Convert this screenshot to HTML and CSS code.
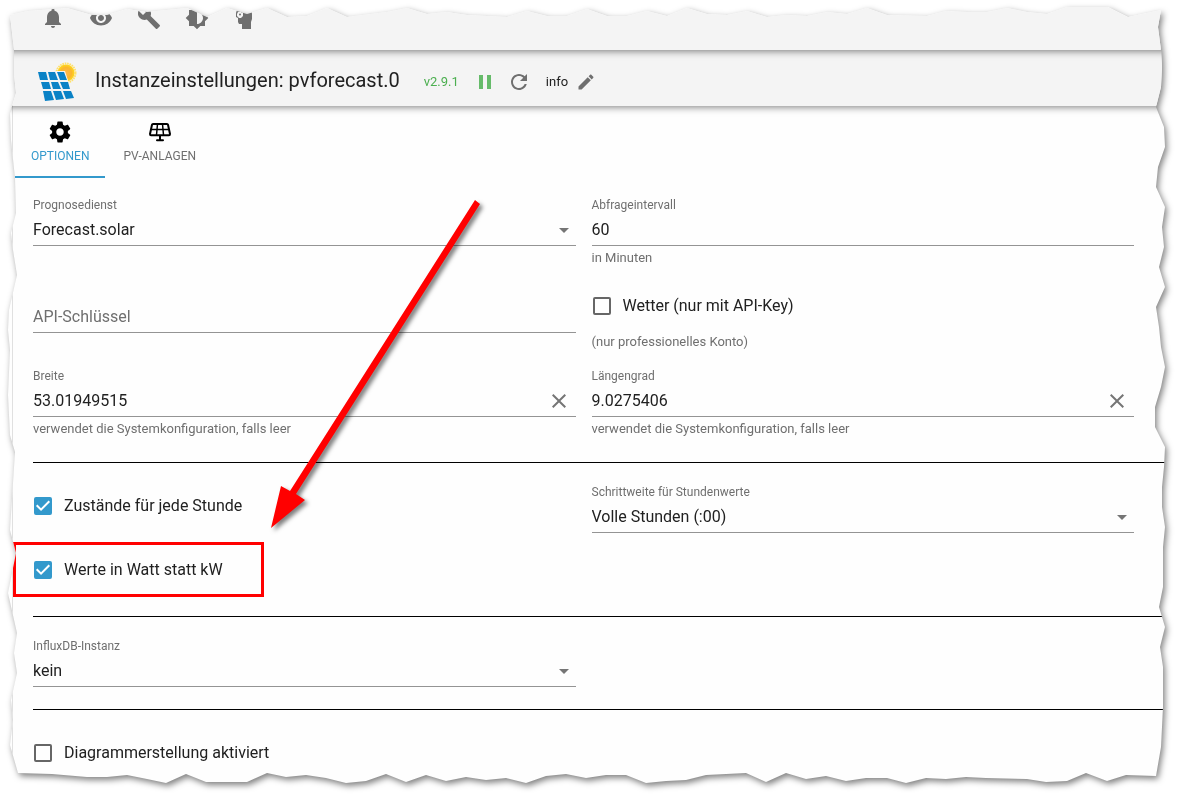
FILE: index.html
```html
<!DOCTYPE html>
<html lang="de">
<head>
<meta charset="utf-8">
<title>Instanzeinstellungen: pvforecast.0</title>
<link rel="stylesheet" href="styles.css">
</head>
<body>
<svg class="defs" width="0" height="0" aria-hidden="true">
  <clipPath id="torn" clipPathUnits="objectBoundingBox">
    <path transform="scale(0.00084962 0.00125786)" d="M10 15 L28 11 67 8 92 15 107 15 127 9 147 12 187 8 207 17 227 8 247 14 267 8 287 17 307 16 327 8 347 17 387 12 407 8 427 14 447 12 467 15 507 17 527 11 547 16 567 16 587 9 607 16 627 16 647 11 667 16 687 8 707 14 727 15 747 11 767 17 787 15 807 16 827 12 847 14 867 8 887 15 927 16 946 11 967 12 987 12 1007 8 1027 12 1047 14 1067 7 1108 7 1128 17 1161 10 1158 27 1161 50 1162 67 1161 87 1156 107 1164 127 1165 147 1158 167 1156 187 1165 207 1162 227 1164 247 1159 267 1165 287 1156 307 1159 327 1161 347 1165 367 1161 387 1155 407 1155 427 1165 447 1164 467 1162 487 1162 507 1165 527 1163 547 1163 587 1159 607 1165 627 1160 647 1163 667 1163 707 1161 747 1156 776 1126 775 1107 781 1086 773 1067 781 1046 782 1027 779 986 778 966 777 946 779 926 778 906 783 887 778 866 778 846 781 826 776 806 779 786 773 766 782 746 773 706 775 686 780 666 781 646 783 626 775 606 775 586 778 566 774 546 776 526 783 506 778 486 780 466 777 446 781 426 775 406 782 386 774 366 781 346 783 326 778 306 775 286 777 267 773 247 782 206 782 186 774 166 783 147 779 127 775 107 777 87 777 52 774 18 773 10 745 13 720 11 700 17 673 14 653 17 633 8 593 16 553 10 530 15 452 10 435 8 395 10 350 8 330 9 310 17 275 13 250 11 233 16 213 15 178 11 140 10 113 16 93 14 74 14 50Z"/>
  </clipPath>
</svg>
<div class="sheet">
  <div class="paper">
    <nav class="toolbar" aria-label="Werkzeuge">
      <button class="tool" aria-label="Benachrichtigungen"><svg viewBox="0 0 24 24"><path d="M12 22c1.100 0 2-.9 2-2h-4c0 1.100.9 2 2 2zm6-6v-5c0-3.070-1.630-5.640-4.500-6.320V4c0-.83-.67-1.500-1.500-1.500s-1.500.67-1.500 1.500v.68C7.640 5.360 6 7.920 6 11v5l-2 2v1h16v-1l-2-2z"/></svg></button>
      <button class="tool" aria-label="Ansicht"><svg viewBox="0 0 24 24"><path d="M12 4.500C7 4.500 2.730 7.610 1 12c1.730 4.390 6 7.500 11 7.500s9.270-3.110 11-7.500c-1.730-4.390-6-7.500-11-7.500zM12 17c-2.760 0-5-2.240-5-5s2.240-5 5-5 5 2.240 5 5-2.240 5-5 5zm0-8c-1.660 0-3 1.340-3 3s1.340 3 3 3 3-1.340 3-3-1.340-3-3-3z"/></svg></button>
      <button class="tool" aria-label="Systemeinstellungen"><svg viewBox="0 0 24 24"><path d="M22.700 19l-9.100-9.100c.9-2.300.4-5-1.500-6.900-2-2-5-2.400-7.400-1.300L9 6 6 9 1.600 4.700C.4 7.100.9 10.100 2.900 12.100c1.900 1.900 4.600 2.400 6.900 1.500l9.100 9.100c.4.4 1 .4 1.400 0l2.300-2.300c.5-.4.5-1.100.1-1.400z"/></svg></button>
      <button class="tool" aria-label="Farbschema"><svg viewBox="0 0 24 24"><path d="M20 8.690V4h-4.690L12 .69 8.690 4H4v4.690L.69 12 4 15.310V20h4.690L12 23.310 15.310 20H20v-4.690L23.310 12 20 8.690zM12 18V6c3.310 0 6 2.690 6 6s-2.690 6-6 6z"/></svg></button>
      <button class="tool" aria-label="Expertenmodus"><svg viewBox="0 0 24 24"><path fill-rule="evenodd" d="M11 1C6 1 3 4 3 8v3l2 1v4l1 2h3v5h9v-7l1-3V8c0-4-3-7-8-7zM5 6h3l1 1 1-1v4l-2 2H6L4 10V8zM6 8.500a1 1 0 1 0 2 0 1 1 0 1 0-2 0z"/></svg></button>
    </nav>
    <header class="titlebar">
      <svg class="logo" viewBox="0 0 40 40" aria-hidden="true">
        <defs><radialGradient id="sun"><stop offset="0" stop-color="#ffb84d"/><stop offset=".65" stop-color="#fbb62c"/><stop offset="1" stop-color="#ffd91c"/></radialGradient></defs>
        <circle cx="28" cy="11" r="9.500" fill="none" stroke="#ffe06a" stroke-width="2" stroke-dasharray="1.600 .8"/>
        <circle cx="28" cy="11" r="8.500" fill="url(#sun)"/>
        <path d="M0 9H27L36 37 7 39Z" fill="#f4f4f4"/>
        <g fill="#0a82c6">
          <path d="M0 10h8l2 8H2z"/><path d="M10 10h7l3 8h-8z"/><path d="M19 10h7l3 8h-7z"/>
          <path d="M3 20h8l2 7H5z"/><path d="M13 20h7l3 7h-8z"/><path d="M22 20h8l2 7h-7z"/>
          <path d="M5 29h8l3 9-9 1z"/><path d="M15 29h8l3 8-8 1z"/><path d="M25 29h8l3 7-8 1z"/>
        </g>
      </svg>
      <h1 class="title">Instanzeinstellungen: pvforecast.0</h1>
      <span class="version">v2.9.1</span>
      <button class="action pause" aria-label="Pause"><svg viewBox="0 0 24 24"><path d="M6 19h4V5H6v14zm8-14v14h4V5h-4z"/></svg></button>
      <button class="action reload" aria-label="Neu starten"><svg viewBox="0 0 24 24"><path d="M17.650 6.350C16.200 4.900 14.210 4 12 4c-4.420 0-7.990 3.580-7.990 8s3.570 8 7.990 8c3.730 0 6.840-2.550 7.730-6h-2.080c-.82 2.330-3.040 4-5.650 4-3.310 0-6-2.690-6-6s2.690-6 6-6c1.660 0 3.140.69 4.220 1.780L13 11h7V4l-2.350 2.350z"/></svg></button>
      <span class="loglevel">info</span>
      <button class="action edit" aria-label="Bearbeiten"><svg viewBox="0 0 24 24"><path d="M3 17.250V21h3.750L17.810 9.940l-3.750-3.750L3 17.250zM20.710 7.040c.39-.39.39-1.020 0-1.410l-2.340-2.340c-.39-.39-1.020-.39-1.410 0l-1.830 1.830 3.750 3.750 1.830-1.830z"/></svg></button>
    </header>
    <main class="content">
      <div class="tabs" role="tablist">
        <button class="tab selected" role="tab" aria-selected="true"><svg viewBox="0 0 24 24"><path transform="translate(-1.200 -1.200) scale(1.100)" d="M19.140 12.940c.04-.3.060-.61.060-.94 0-.32-.02-.64-.07-.94l2.030-1.580c.18-.14.230-.41.120-.61l-1.920-3.320c-.12-.22-.37-.29-.59-.22l-2.390.96c-.5-.38-1.030-.7-1.620-.94l-.36-2.540c-.04-.24-.24-.41-.48-.41h-3.840c-.24 0-.43.170-.47.410l-.36 2.540c-.59.240-1.130.570-1.620.940l-2.390-.96c-.22-.08-.47 0-.59.220L2.740 8.870c-.12.210-.08.470.12.610l2.030 1.580c-.05.300-.09.630-.09.940s.02.640.070.940l-2.030 1.580c-.18.140-.23.410-.12.610l1.920 3.320c.12.220.37.290.59.220l2.390-.96c.5.380 1.030.7 1.620.94l.36 2.540c.05.240.24.410.48.410h3.840c.24 0 .44-.17.470-.41l.36-2.540c.59-.24 1.130-.56 1.620-.94l2.390.96c.22.080.470 0 .59-.22l1.920-3.320c.12-.22.070-.47-.12-.61l-2.010-1.580zM12 15.400c-1.880 0-3.400-1.520-3.400-3.400s1.520-3.400 3.400-3.400 3.400 1.520 3.400 3.400-1.520 3.400-3.400 3.400z"/></svg>OPTIONEN</button>
        <button class="tab" role="tab" aria-selected="false"><svg viewBox="0 0 24 24"><g fill="none" stroke="#000" stroke-linejoin="round" stroke-linecap="round"><path stroke-width="2" d="M5 4h14q.8 0 1 .8L22 14q0 1.200-1 1.200H3q-1 0-1-1.200L4 4.800q.2-.8 1-.8ZM12 16v4M9 20.300h6"/><path stroke-width="1.500" d="M3 9.500h18M9.500 4l-1 11M14.500 4l1 11"/></g></svg>PV-ANLAGEN</button>
      </div>

      <section class="group first">
        <div class="field">
          <label for="service">Prognosedienst</label>
          <div class="control"><select id="service"><option>Forecast.solar</option></select><svg class="caret" viewBox="0 0 24 24"><path d="M7 10l5 5 5-5z"/></svg></div>
        </div>
        <div class="field">
          <label for="interval">Abfrageintervall</label>
          <div class="control"><input id="interval" type="text" value="60"></div>
          <p class="hint">in Minuten</p>
        </div>
        <div class="field unlabelled">
          <div class="control"><input id="apikey" type="text" placeholder="API-Schlüssel" aria-label="API-Schlüssel"></div>
        </div>
        <div class="field">
          <label class="check"><input type="checkbox">Wetter (nur mit API-Key)</label>
          <p class="hint note">(nur professionelles Konto)</p>
        </div>
        <div class="field">
          <label for="lat">Breite</label>
          <div class="control"><input id="lat" type="text" value="53.01949515"><button class="clear" aria-label="Breite löschen"><svg viewBox="0 0 24 24"><path d="M19 6.410L17.590 5 12 10.590 6.410 5 5 6.410 10.590 12 5 17.590 6.410 19 12 13.410 17.590 19 19 17.590 13.410 12z"/></svg></button></div>
          <p class="hint">verwendet die Systemkonfiguration, falls leer</p>
        </div>
        <div class="field">
          <label for="lon">Längengrad</label>
          <div class="control"><input id="lon" type="text" value="9.0275406"><button class="clear" aria-label="Längengrad löschen"><svg viewBox="0 0 24 24"><path d="M19 6.410L17.590 5 12 10.590 6.410 5 5 6.410 10.590 12 5 17.590 6.410 19 12 13.410 17.590 19 19 17.590 13.410 12z"/></svg></button></div>
          <p class="hint">verwendet die Systemkonfiguration, falls leer</p>
        </div>
      </section>

      <section class="group hourly">
        <label class="check"><input type="checkbox" checked>Zustände für jede Stunde</label>
        <div class="field">
          <label for="step">Schrittweite für Stundenwerte</label>
          <div class="control"><select id="step"><option>Volle Stunden (:00)</option></select><svg class="caret" viewBox="0 0 24 24"><path d="M7 10l5 5 5-5z"/></svg></div>
        </div>
        <label class="check marked"><input type="checkbox" checked>Werte in Watt statt kW</label>
        <svg class="arrow" viewBox="0 0 240 350" aria-hidden="true"><path d="M215 10L220 14 36 304 45 310 11 338 21 296 30 301Z"/></svg>
      </section>

      <section class="group influx">
        <div class="field">
          <label for="influx">InfluxDB-Instanz</label>
          <div class="control"><select id="influx"><option>kein</option></select><svg class="caret" viewBox="0 0 24 24"><path d="M7 10l5 5 5-5z"/></svg></div>
        </div>
      </section>

      <section class="group chart">
        <label class="check"><input type="checkbox">Diagrammerstellung aktiviert</label>
      </section>
    </main>
  </div>
</div>
</body>
</html>
```
FILE: styles.css
```css
*,
*::after {
  box-sizing: border-box;
}

body {
  margin: 0;
  background: #fff;
  color: #212121;
  font: 16px/24px Roboto, sans-serif;
}

button {
  padding: 0;
  border: 0;
  background: none;
  font: inherit;
  color: inherit;
}

svg {
  display: block;
  fill: currentColor;
}

.defs {
  position: absolute;
}

.sheet {
  filter: drop-shadow(2px 3px 3px rgba(0, 0, 0, 0.5));
}

.paper {
  background: #fefefe;
  clip-path: url(#torn);
}

.toolbar,
.titlebar {
  position: relative;
  display: flex;
  background: #f4f4f4;
  box-shadow: 0 2px 4px -1px rgba(0, 0, 0, 0.2), 0 4px 5px 0 rgba(0, 0, 0, 0.14), 0 1px 10px 0 rgba(0, 0, 0, 0.12);
}

.toolbar {
  z-index: 2;
  padding: 6px 29px 20px;
  color: #6f6f6f;
}

.tool {
  display: grid;
  place-items: center;
  width: 48px;
}

.tool svg {
  width: 24px;
}

.titlebar {
  z-index: 1;
  align-items: center;
  height: 56px;
  padding: 8px 38px 0;
}

.logo {
  width: 40px;
  margin-right: 17px;
}

.title {
  margin: 0 24px 4px 0;
  font-size: 20px;
  font-weight: 400;
}

.version,
.loglevel {
  font-size: 13px;
}

.version {
  color: #4caf50;
  margin-right: 14px;
}

.action svg {
  width: 24px;
}

.action {
  color: #6f6f6f;
}

.pause {
  color: #66bb6a;
}

.reload {
  margin: 0 15px 0 10px;
}

.edit {
  margin-left: 8px;
}

.edit svg {
  width: 20px;
}

.content {
  position: relative;
  margin-left: 12px;
  border-left: 1px solid #e0e0e0;
}

.tabs {
  display: flex;
  gap: 2px;
  padding-left: 2px;
}

.tab {
  display: flex;
  flex-direction: column;
  align-items: center;
  gap: 2px;
  min-width: 90px;
  height: 72px;
  padding: 14px 16px 0;
  border-bottom: 2px solid transparent;
  font-size: 12px;
  line-height: 20px;
  color: #6f6f6f;
}

.tab svg {
  width: 24px;
  color: #000;
}

.tab.selected {
  color: #3399cc;
  border-bottom-color: #3399cc;
}

.group {
  position: relative;
  display: grid;
  grid-template-columns: 1fr 1fr;
  column-gap: 16px;
  align-items: start;
  margin-left: 20px;
  padding: 21px 43px 0 0;
  border-top: 1px solid #000;
}

.group.first {
  row-gap: 18px;
  padding-top: 19px;
  padding-bottom: 25px;
  border-top: 0;
}

.group.hourly {
  row-gap: 15px;
  padding-bottom: 24px;
}

.group.influx {
  padding-bottom: 22px;
}

.group.chart {
  padding-bottom: 20px;
}

.field > label:not(.check) {
  display: block;
  font-size: 12px;
  line-height: 16px;
  color: #6f6f6f;
}

.unlabelled {
  padding-top: 16px;
}

.control {
  position: relative;
  display: flex;
  border-bottom: 1px solid #949494;
}

.control input,
.control select {
  flex: 1;
  min-width: 0;
  height: 32px;
  padding: 0;
  border: 0;
  outline: 0;
  appearance: none;
  background: none;
  color: inherit;
  font: inherit;
}

.control select {
  padding-top: 2px;
}

.control input::placeholder {
  color: #6f6f6f;
  opacity: 1;
}

.caret {
  position: absolute;
  right: 0;
  top: 5px;
  width: 24px;
  color: #757575;
  pointer-events: none;
}

.clear {
  display: grid;
  place-items: center;
  width: 34px;
  padding-top: 2px;
  color: #757575;
}

.clear svg {
  width: 24px;
}

.hint {
  margin: 4px 0 0;
  font-size: 13px;
  line-height: 16px;
  color: #6f6f6f;
}

.hint.note {
  margin-top: 6px;
}

.check {
  position: relative;
  display: flex;
  align-items: center;
  height: 44px;
}

.check input {
  position: relative;
  width: 18px;
  height: 18px;
  margin: 0 12px 0 1px;
  border: 2px solid #666;
  border-radius: 2px;
  appearance: none;
}

.check input:checked {
  border-color: #3399cc;
  background: #3399cc;
}

.check input:checked::after {
  content: "";
  position: absolute;
  inset: -2px;
  background: #fff;
  clip-path: polygon(39% 78%, 11% 50%, 19% 42%, 39% 62%, 81% 20%, 89% 28%);
}

.marked::after {
  content: "";
  position: absolute;
  left: -20px;
  top: -6px;
  bottom: -5px;
  width: 251px;
  border: 3px solid #f00;
}

.arrow {
  position: absolute;
  left: 227px;
  bottom: 76px;
  width: 240px;
  overflow: visible;
  color: #f00;
  pointer-events: none;
  filter: drop-shadow(3px 3px 2px rgba(0, 0, 0, 0.5));
}
```
